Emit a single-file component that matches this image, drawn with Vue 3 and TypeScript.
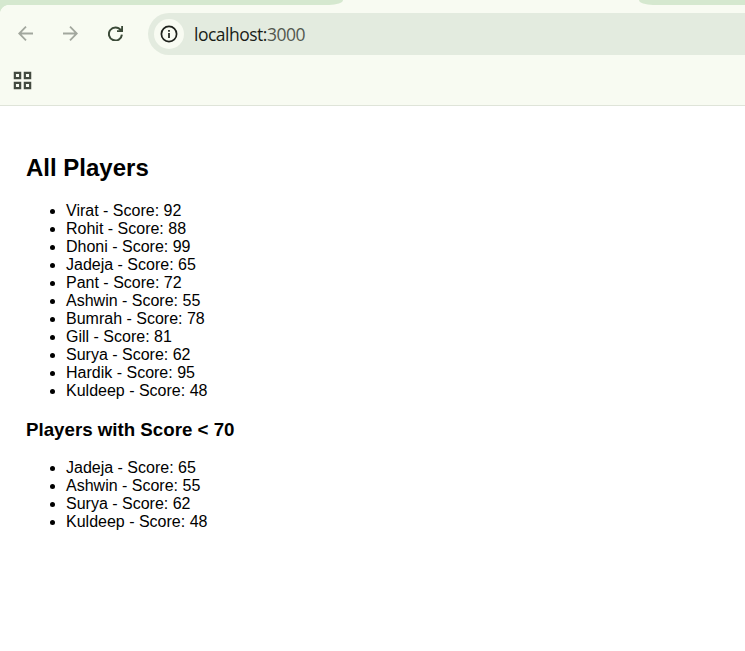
<script setup lang="ts">
interface Player {
  name: string
  score: number
}

const players: Player[] = [
  { name: 'Virat', score: 92 },
  { name: 'Rohit', score: 88 },
  { name: 'Dhoni', score: 99 },
  { name: 'Jadeja', score: 65 },
  { name: 'Pant', score: 72 },
  { name: 'Ashwin', score: 55 },
  { name: 'Bumrah', score: 78 },
  { name: 'Gill', score: 81 },
  { name: 'Surya', score: 62 },
  { name: 'Hardik', score: 95 },
  { name: 'Kuldeep', score: 48 },
]
const lowScorers = players.filter((p) => p.score < 70)
</script>

<template>
  <div class="window">
    <header class="chrome">
      <div class="tabs">
        <div class="tab-left"></div>
        <div class="tab-right"></div>
      </div>
      <div class="toolbar">
        <svg class="nav dim" viewBox="0 0 15 15"><path d="M15 7.5H1.3M8 .7L1.2 7.5L8 14.3" /></svg>
        <svg class="nav dim" viewBox="0 0 15 15"><path d="M0 7.5H13.7M7 .7L13.8 7.5L7 14.3" /></svg>
        <svg class="nav reload" viewBox="0 0 15 15">
          <path d="M12.7 4.2A6.5 6.5 0 1 0 13.9 8.6" />
          <path class="head" d="M15 0V6H9V4.2H11.6L13.2 2.6V0Z" />
        </svg>
        <div class="address">
          <span class="info">
            <svg viewBox="0 0 18 18">
              <circle cx="9" cy="9" r="7.6" />
              <path d="M9 8V13M9 5V6.8" />
            </svg>
          </span>
          <span class="url">localhost:<span class="port">3000</span></span>
        </div>
      </div>
      <div class="bookmarks">
        <svg viewBox="0 0 20 20">
          <path d="M1.85 1.85H7.15V7.15H1.85ZM11.85 1.85H17.15V7.15H11.85ZM1.85 11.85H7.15V17.15H1.85ZM11.85 11.85H17.15V17.15H11.85Z" />
        </svg>
      </div>
    </header>
    <main class="page">
      <h2>All Players</h2>
      <ul>
        <li v-for="p in players" :key="p.name">{{ p.name }} - Score: {{ p.score }}</li>
      </ul>
      <h3>Players with Score &lt; 70</h3>
      <ul>
        <li v-for="p in lowScorers" :key="p.name">{{ p.name }} - Score: {{ p.score }}</li>
      </ul>
    </main>
  </div>
</template>

<style>
body {
  background: #fff;
}
</style>

<style scoped>
.window {
  height: 651px;
  overflow: hidden;
  background: #fff;
}
.chrome {
  box-sizing: border-box;
  height: 106px;
  background: #f8fbf2;
  border-bottom: 1px solid #dfe4d9;
}
.tabs {
  display: flex;
  justify-content: space-between;
  height: 13px;
  background: radial-gradient(circle at 9px 14px, #f8fbf2 8.7px, #d5e8cf 9.4px) 0 0 / 9px 13px no-repeat;
}
.tab-left {
  width: 343px;
  height: 5px;
  background: #d5e8cf;
  border-bottom-right-radius: 14px 5px;
}
.tab-right {
  width: 106px;
  height: 5px;
  background: #d5e8cf;
  border-bottom-left-radius: 14px 5px;
}
.toolbar {
  display: flex;
  align-items: center;
  height: 42px;
  padding-left: 18px;
}
.nav {
  flex: none;
  width: 15px;
  height: 15px;
  margin: 0 30px 1px 0;
  fill: none;
  stroke: #3b4a38;
  stroke-width: 2;
}
.nav.dim {
  stroke: #a2a79e;
  stroke-width: 1.8;
}
.nav.reload {
  margin-right: 25px;
}
.head {
  fill: #3b4a38;
  stroke: none;
}
.address {
  display: flex;
  flex: 1;
  align-items: center;
  box-sizing: border-box;
  height: 42px;
  padding-left: 6px;
  background: #e3ebdf;
  border-radius: 21px 0 0 21px;
}
.info {
  display: flex;
  align-items: center;
  justify-content: center;
  width: 30px;
  height: 30px;
  margin-right: 10px;
  border-radius: 50%;
  background: #f8fbf2;
}
.info svg {
  width: 18px;
  height: 18px;
  fill: none;
  stroke: #1d211b;
  stroke-width: 1.7;
}
.url {
  font: 17.5px/24px "Open Sans", "Noto Sans", sans-serif;
  letter-spacing: -0.5px;
  color: #191d17;
}
.port {
  color: #53584f;
}
.bookmarks {
  display: flex;
  padding: 16px 0 0 13px;
}
.bookmarks svg {
  width: 20px;
  height: 20px;
  fill: none;
  stroke: #434a40;
  stroke-width: 2.2;
}
.page {
  padding: 48px 26px 0;
  font: 16px/18px "Liberation Sans", Arial, sans-serif;
  color: #000;
}
h2 {
  margin: 0 0 20px;
  font-size: 24px;
  line-height: 28px;
}
h3 {
  margin: 19px 0;
  font-size: 18.72px;
  line-height: 21px;
}
ul {
  margin: 0;
  padding-left: 40px;
}
</style>
